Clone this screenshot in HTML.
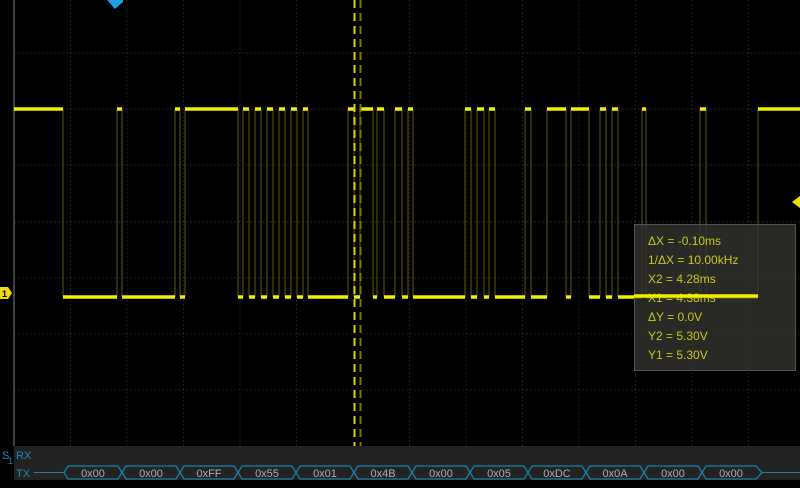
<!DOCTYPE html>
<html><head><meta charset="utf-8"><style>
html,body{margin:0;padding:0;background:#000;width:800px;height:488px;overflow:hidden;font-family:"Liberation Sans",sans-serif}
</style></head><body>
<svg width="800" height="488" viewBox="0 0 800 488" xmlns="http://www.w3.org/2000/svg" style="position:absolute;left:0;top:0">
<rect width="800" height="488" fill="#000"/>
<g stroke="#1e1e1e" stroke-width="1" stroke-dasharray="2,2">
<line x1="70.5" y1="0" x2="70.5" y2="446"/><line x1="127" y1="0" x2="127" y2="446"/><line x1="183.5" y1="0" x2="183.5" y2="446"/><line x1="240" y1="0" x2="240" y2="446"/><line x1="296.5" y1="0" x2="296.5" y2="446"/><line x1="409.5" y1="0" x2="409.5" y2="446"/><line x1="466" y1="0" x2="466" y2="446"/><line x1="522.5" y1="0" x2="522.5" y2="446"/><line x1="579" y1="0" x2="579" y2="446"/><line x1="635.5" y1="0" x2="635.5" y2="446"/><line x1="692" y1="0" x2="692" y2="446"/><line x1="748.5" y1="0" x2="748.5" y2="446"/>
<line x1="14" y1="53" x2="800" y2="53"/><line x1="14" y1="109" x2="800" y2="109"/><line x1="14" y1="165" x2="800" y2="165"/><line x1="14" y1="222" x2="800" y2="222" stroke="#2a2a2a"/><line x1="14" y1="278" x2="800" y2="278"/><line x1="14" y1="334" x2="800" y2="334"/><line x1="14" y1="390" x2="800" y2="390"/>
</g>
<line x1="14" y1="0" x2="14" y2="446" stroke="#555" stroke-width="1.5"/>
<!-- dim edges -->
<g stroke="#3d3d05" stroke-width="1.5">
<path id="edges" d="M63 109V297M117 109V297M122 109V297M175 109V297M180 109V297M185 109V297M238 109V297M243 109V297M249 109V297M255 109V297M261 109V297M267 109V297M273 109V297M279 109V297M285 109V297M291 109V297M297 109V297M303 109V297M308 109V297M348 109V297M354 109V297M360 109V297M373 109V297M377 109V297M384 109V297M395 109V297M402 109V297M408 109V297M413 109V297M465 109V297M471 109V297M477 109V297M484 109V297M489 109V297M495 109V297M525 109V297M531 109V297M547 109V297M566 109V297M571 109V297M589 109V297M600 109V297M606 109V297M612 109V297M618 109V297M642 109V297M646 109V297M700 109V297M706 109V297M758 109V297"/>
</g>
<!-- levels -->
<g fill="none" stroke="#f0f000" stroke-width="3.5">
<path d="M14 109H63M117 109H122M175 109H180M185 109H238M243 109H249M255 109H261M267 109H273M279 109H285M291 109H297M303 109H308M348 109H354M360 109H373M377 109H384M395 109H402M408 109H413M465 109H471M477 109H484M489 109H495M525 109H531M547 109H566M571 109H589M600 109H606M612 109H618M642 109H646M700 109H706M758 109H800"/>
<path d="M63 297H117M122 297H175M180 297H185M238 297H243M249 297H255M261 297H267M273 297H279M285 297H291M297 297H303M308 297H348M354 297H360M373 297H377M384 297H395M402 297H408M413 297H465M471 297H477M484 297H489M495 297H525M531 297H547M566 297H571M589 297H600M606 297H612M618 297H642M646 297H700M706 297H758"/>
</g>
<!-- cursors -->
<line x1="354.5" y1="0" x2="354.5" y2="446" stroke="#d8d800" stroke-width="2" stroke-dasharray="8,5"/>
<line x1="360.5" y1="0" x2="360.5" y2="446" stroke="#7a7a00" stroke-width="2" stroke-dasharray="8,5"/>
<!-- markers -->
<path d="M107 0H123V2L115 9Z" fill="#1aa0e0"/>
<path d="M0 287H8L12 293L8 299H0Z" fill="#f0e000"/>
<text x="2" y="297" font-size="9" fill="#000" font-weight="bold">1</text>
<path d="M800 196V208L792 202Z" fill="#f0e000"/>
<!-- info box -->
<rect x="634.5" y="224.5" width="161" height="146" fill="rgba(50,50,45,0.82)" stroke="#555"/>
<g fill="#c8c820" font-size="12">
<text x="648" y="245">ΔX = -0.10ms</text>
<text x="648" y="264">1/ΔX = 10.00kHz</text>
<text x="648" y="283">X2 = 4.28ms</text>
<text x="648" y="302">X1 = 4.38ms</text>
<text x="648" y="321">ΔY = 0.0V</text>
<text x="648" y="340">Y2 = 5.30V</text>
<text x="648" y="359">Y1 = 5.30V</text>
</g>
<line x1="634" y1="296" x2="758" y2="296" stroke="#f0f000" stroke-width="3.5"/>
<!-- decode bar -->
<rect x="14" y="446" width="786" height="34" fill="#232323"/>
<g fill="#1a8cb8" font-size="11">
<text x="2" y="459">S</text><text x="8" y="464" font-size="9">1</text>
<text x="16" y="459">RX</text>
<text x="16" y="477">TX</text>
</g>
<line x1="34" y1="472.5" x2="64" y2="472.5" stroke="#1a7fa8"/>
<line x1="762" y1="472.5" x2="800" y2="472.5" stroke="#1a7fa8"/>
<g fill="none" stroke="#1a7fa8" stroke-width="1.3">
<path d="M64 472.5L68 466H118L122 472.5L118 479H68Z"/>
<path d="M122 472.5L126 466H176L180 472.5L176 479H126Z"/>
<path d="M180 472.5L184 466H234L238 472.5L234 479H184Z"/>
<path d="M238 472.5L242 466H292L296 472.5L292 479H242Z"/>
<path d="M296 472.5L300 466H350L354 472.5L350 479H300Z"/>
<path d="M354 472.5L358 466H408L412 472.5L408 479H358Z"/>
<path d="M412 472.5L416 466H466L470 472.5L466 479H416Z"/>
<path d="M470 472.5L474 466H524L528 472.5L524 479H474Z"/>
<path d="M528 472.5L532 466H582L586 472.5L582 479H532Z"/>
<path d="M586 472.5L590 466H640L644 472.5L640 479H590Z"/>
<path d="M644 472.5L648 466H698L702 472.5L698 479H648Z"/>
<path d="M702 472.5L706 466H756L762 472.5L756 479H706Z"/>
</g>
<g fill="#b0b0b0" font-size="11" text-anchor="middle">
<text x="93" y="477">0x00</text><text x="151" y="477">0x00</text><text x="209" y="477">0xFF</text><text x="267" y="477">0x55</text><text x="325" y="477">0x01</text><text x="383" y="477">0x4B</text><text x="441" y="477">0x00</text><text x="499" y="477">0x05</text><text x="557" y="477">0xDC</text><text x="615" y="477">0x0A</text><text x="673" y="477">0x00</text><text x="731" y="477">0x00</text>
</g>
</svg>
</body></html>
